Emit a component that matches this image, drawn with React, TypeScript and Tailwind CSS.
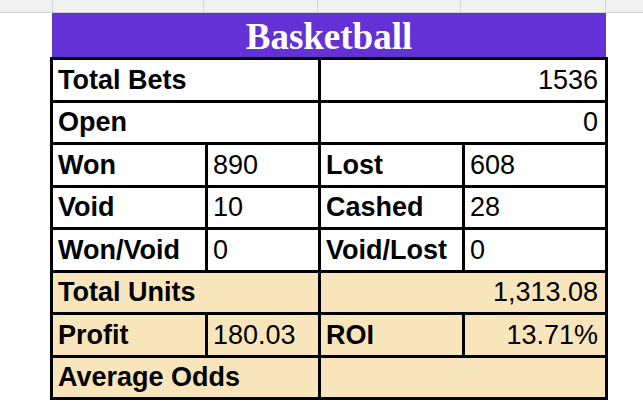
const rows: { cells: { text: string; span?: boolean; bold?: boolean; right?: boolean }[]; beige?: boolean }[] = [
  { cells: [{ text: "Total Bets", span: true, bold: true }, { text: "1536", span: true, right: true }] },
  { cells: [{ text: "Open", span: true, bold: true }, { text: "0", span: true, right: true }] },
  { cells: [{ text: "Won", bold: true }, { text: "890" }, { text: "Lost", bold: true }, { text: "608" }] },
  { cells: [{ text: "Void", bold: true }, { text: "10" }, { text: "Cashed", bold: true }, { text: "28" }] },
  { cells: [{ text: "Won/Void", bold: true }, { text: "0" }, { text: "Void/Lost", bold: true }, { text: "0" }] },
  { cells: [{ text: "Total Units", span: true, bold: true }, { text: "1,313.08", span: true, right: true }], beige: true },
  { cells: [{ text: "Profit", bold: true }, { text: "180.03" }, { text: "ROI", bold: true }, { text: "13.71%", right: true }], beige: true },
  { cells: [{ text: "Average Odds", span: true, bold: true }, { text: "", span: true }], beige: true },
];

const rowHeights = ["h-[43px]", "h-[42px]", "h-[43px]", "h-[42px]", "h-[43px]", "h-[42px]", "h-[43px]", "h-[42px]"];

export default function App() {
  return (
    <div className="w-[643px] h-[419px] bg-white overflow-hidden" style={{ fontFamily: '"Liberation Sans", Arial, sans-serif' }}>
      {/* spreadsheet gridline strip */}
      <div className="flex h-[13px] bg-[#f1f1f1] border-b border-[#cfcfcf]">
        <div className="w-[53px] border-r border-[#d4d4d4]" />
        <div className="w-[151px] border-r border-[#d4d4d4]" />
        <div className="w-[114px] border-r border-[#d4d4d4]" />
        <div className="w-[143px] border-r border-[#d4d4d4]" />
        <div className="w-[145px] border-r border-[#d4d4d4]" />
        <div className="flex-1" />
      </div>

      <div className="ml-[52px] w-[554px] h-[44px] bg-[#6331d5] flex items-center justify-center">
        <span className="text-white font-bold text-[37px] leading-none pt-[2px]" style={{ fontFamily: '"Liberation Serif", "Times New Roman", serif' }}>
          Basketball
        </span>
      </div>

      <div className="ml-[50px] w-[558px] border-l-[3px] border-t-[3px] border-black grid grid-cols-[155px_113px_144px_143px]">
        {rows.map((row, ri) =>
          row.cells.map((c, ci) => (
            <div
              key={`${ri}-${ci}`}
              className={`${rowHeights[ri]} ${c.span ? "col-span-2" : ""} ${row.beige ? "bg-[#f9e5bb]" : "bg-white"} border-r-[3px] border-b-[3px] border-black flex items-center ${c.right ? "justify-end pr-[7px]" : "pl-[5px]"} ${c.bold ? "font-bold" : ""} text-[27px] leading-none text-black whitespace-nowrap`}
            >
              {c.text}
            </div>
          ))
        )}
      </div>
    </div>
  );
}
